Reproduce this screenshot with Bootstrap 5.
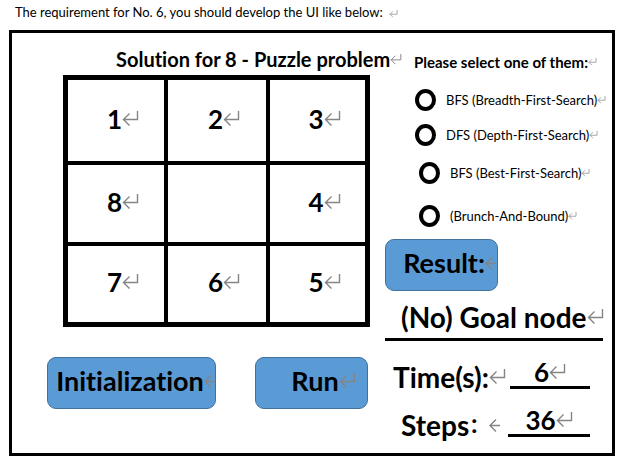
<!DOCTYPE html>
<html lang="en">
<head>
<meta charset="utf-8">
<meta name="viewport" content="width=device-width, initial-scale=1">
<title>Solution for 8 - Puzzle problem</title>
<link href="https://cdn.jsdelivr.net/npm/bootstrap@5.3.0/dist/css/bootstrap.min.css" rel="stylesheet">
<style>
  body { font-family: Lato, "Noto Sans CJK SC", sans-serif; font-variant-ligatures: none; color: #000; background: #fff; font-size: 13px; line-height: 16px; }
  .intro { padding: 4px 15px 10px; }
  .frame { border: 3px solid #000; margin: 0 11px 15px 9px; display: grid; grid-template-columns: minmax(0, 373fr) minmax(0, 227fr); }
  .board-side { padding: 14px 17px 44px 35px; }
  .board-title { font-size: 20px; line-height: 24px; font-weight: 700; margin: 0 0 4px 69px; white-space: nowrap; }
  .big { font-size: 28px; line-height: 32px; font-weight: 700; }
  .ret { fill: none; stroke: #858585; flex: none; }
  .ret-lg { width: 17px; height: 16px; }
  .ret-md { width: 12px; height: 11px; }
  .ret-sm { width: 9px; height: 8px; }
  .ret-cut { width: 11px; height: 14px; }
  .puzzle { width: calc(100% - 14px); margin-left: 16px; border: 5px solid #000; border-collapse: separate; border-spacing: 0; table-layout: fixed; }
  .puzzle td { font-size: 26px; padding: 0 0 4px 14px; border: 0 solid #000; border-right-width: 4px; border-bottom-width: 4px; height: 81px; text-align: center; vertical-align: middle; }
  .puzzle tr:first-child td { height: 85px; }
  .puzzle tr:last-child td { height: 76px; border-bottom-width: 0; }
  .puzzle td:last-child { border-right-width: 0; }
  .actions { margin-top: 30px; }
  .action { font-size: 27px; font-variant-ligatures: none; height: 52px; padding: 0 0 4px; background: #5b9bd5; border: 1px solid #41719c; border-radius: 9px; color: #000; display: flex; align-items: center; justify-content: center; }
  .action:hover { background: #4d8dc8; }
  .wide { width: 169px; }
  .narrow { width: 113px; }
  .select-side { padding-top: 21px; }
  .options { padding-left: 29px; }
  .options legend { font-size: 15px; line-height: 16px; font-weight: 700; float: none; margin: 0 0 13px; white-space: nowrap; }
  .choices { display: grid; grid-template-rows: 34px 36px 40px 46px; }
  .choice { display: flex; align-items: center; white-space: nowrap; }
  .choice-in { padding-left: 4px; }
  .choice input { appearance: none; width: 21px; height: 22px; border: 4px solid #000; border-radius: 50%; margin: 0 10px 0 1px; background: #fff; flex: none; }
  .choice input:checked { background: radial-gradient(#000 40%, #fff 45%); }
  .goal { border-bottom: 3px solid #000; margin: 10px 9px 0 0; padding: 0 0 5px 16px; }
  .stat { display: flex; align-items: flex-start; margin-right: 22px; }
  .stat output { font-size: 26px; line-height: 28px; border-bottom: 3px solid #000; flex: 1; display: flex; justify-content: center; align-items: center; padding-top: 1px; }
  .stat label { padding-top: 4px; white-space: nowrap; }
  .colon { font-size: 20px; line-height: 20px; }
</style>
</head>
<body>
<svg width="0" height="0" class="d-none" aria-hidden="true">
  <symbol id="ret" viewBox="0 0 17 16"><path d="M15.5 0V8.5H1M7.5 2.5L1.5 8.5L7.5 14.5" stroke-width="1.4"/></symbol>
  <symbol id="cut" viewBox="0 0 11 14"><path d="M11 7.5H1M7 1.5L1 7.5L7 13.5" stroke-width="1.4"/></symbol>
</svg>
<p class="intro mb-0">The requirement for No. 6, you should develop the UI like below: &nbsp;<svg class="ret ret-sm" aria-hidden="true"><use href="#ret"/></svg></p>
<main class="frame">
  <section class="board-side">
    <h1 class="board-title d-flex align-items-center">Solution for 8 - Puzzle problem<svg class="ret ret-md" aria-hidden="true"><use href="#ret"/></svg></h1>
    <table class="puzzle big">
      <colgroup><col style="width:33.7%"><col style="width:34.3%"><col style="width:32%"></colgroup>
      <tbody>
        <tr>
          <td><span class="d-inline-flex align-items-center">1<svg class="ret ret-lg" aria-hidden="true"><use href="#ret"/></svg></span></td>
          <td><span class="d-inline-flex align-items-center">2<svg class="ret ret-lg" aria-hidden="true"><use href="#ret"/></svg></span></td>
          <td><span class="d-inline-flex align-items-center">3<svg class="ret ret-lg" aria-hidden="true"><use href="#ret"/></svg></span></td>
        </tr>
        <tr>
          <td><span class="d-inline-flex align-items-center">8<svg class="ret ret-lg" aria-hidden="true"><use href="#ret"/></svg></span></td>
          <td></td>
          <td><span class="d-inline-flex align-items-center">4<svg class="ret ret-lg" aria-hidden="true"><use href="#ret"/></svg></span></td>
        </tr>
        <tr>
          <td><span class="d-inline-flex align-items-center">7<svg class="ret ret-lg" aria-hidden="true"><use href="#ret"/></svg></span></td>
          <td><span class="d-inline-flex align-items-center">6<svg class="ret ret-lg" aria-hidden="true"><use href="#ret"/></svg></span></td>
          <td><span class="d-inline-flex align-items-center">5<svg class="ret ret-lg" aria-hidden="true"><use href="#ret"/></svg></span></td>
        </tr>
      </tbody>
    </table>
    <div class="actions d-flex justify-content-between">
      <button type="button" class="btn action wide fw-bold ps-2">Initialization<svg class="ret ret-cut" aria-hidden="true"><use href="#cut"/></svg></button>
      <button type="button" class="btn action narrow fw-bold ps-4">Run<svg class="ret ret-lg" aria-hidden="true"><use href="#ret"/></svg></button>
    </div>
  </section>
  <section class="select-side">
    <fieldset class="options">
      <legend class="d-flex align-items-center">Please select one of them:<svg class="ret ret-sm" aria-hidden="true"><use href="#ret"/></svg></legend>
      <div class="choices">
        <div class="choice"><input type="radio" name="algo" id="a1"><label for="a1">BFS (Breadth-First-Search)</label><svg class="ret ret-sm" aria-hidden="true"><use href="#ret"/></svg></div>
        <div class="choice"><input type="radio" name="algo" id="a2"><label for="a2">DFS (Depth-First-Search)</label><svg class="ret ret-sm" aria-hidden="true"><use href="#ret"/></svg></div>
        <div class="choice choice-in"><input type="radio" name="algo" id="a3"><label for="a3">BFS (Best-First-Search)</label><svg class="ret ret-sm" aria-hidden="true"><use href="#ret"/></svg></div>
        <div class="choice choice-in"><input type="radio" name="algo" id="a4"><label for="a4">(Brunch-And-Bound)</label><svg class="ret ret-sm" aria-hidden="true"><use href="#ret"/></svg></div>
      </div>
    </fieldset>
    <button type="button" class="btn action narrow fw-bold ps-3">Result:<svg class="ret ret-cut" aria-hidden="true"><use href="#cut"/></svg></button>
    <p class="goal big mb-3 d-flex align-items-center text-nowrap">(No) Goal node<svg class="ret ret-lg" aria-hidden="true"><use href="#ret"/></svg></p>
    <div class="stat big ps-2">
      <label for="time" class="d-flex align-items-center me-1">Time(s):<svg class="ret ret-lg" aria-hidden="true"><use href="#ret"/></svg></label>
      <output id="time">6<svg class="ret ret-lg" aria-hidden="true"><use href="#ret"/></svg></output>
    </div>
    <div class="stat big mt-2 pt-1 ps-3">
      <label for="steps" class="d-flex align-items-center me-2">Steps<span class="colon">：</span><svg class="ret ret-cut" aria-hidden="true"><use href="#cut"/></svg></label>
      <output id="steps">36<svg class="ret ret-lg" aria-hidden="true"><use href="#ret"/></svg></output>
    </div>
  </section>
</main>
<script src="https://cdn.jsdelivr.net/npm/bootstrap@5.3.0/dist/js/bootstrap.bundle.min.js"></script>
</body>
</html>
